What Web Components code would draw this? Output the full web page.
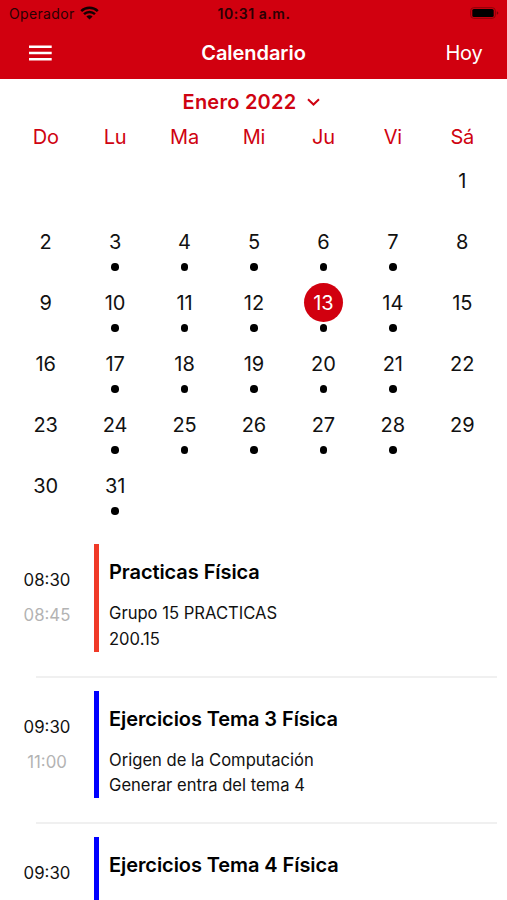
<!DOCTYPE html>
<html lang="es">
<head>
<meta charset="utf-8">
<title>Calendario</title>
<style>
html, body { margin: 0; height: 900px; overflow: hidden; background: #fff; }
body { font-family: Inter, "Liberation Sans", sans-serif; color: #111; }
</style>
</head>
<body>
<calendar-screen></calendar-screen>
<script>
const define = (name, html, setup) => customElements.define(name, class extends HTMLElement {
  connectedCallback() {
    const root = this.attachShadow({ mode: 'open' });
    root.innerHTML = html;
    if (setup) setup(this, root);
  }
});

define('status-bar', `
<style>
:host { display: grid; grid-template-columns: 1fr auto 1fr; align-items: center; height: 27px; padding: 0 8px 0 9px; box-sizing: border-box; color: #2a0003; font-size: 14px; line-height: 27px; }
.left { display: flex; align-items: center; gap: 5px; }
.carrier { letter-spacing: .35px; }
.time { font-weight: 600; letter-spacing: .55px; }
.right { display: flex; justify-content: flex-end; }
svg { display: block; }
.right svg { margin-top: -1px; }
.left svg { margin-top: -2px; }
</style>
<div class="left"><span class="carrier">Operador</span>
<svg width="19" height="14" viewBox="0 0 19 14" fill="none" stroke="#140002"><path d="M1.2 5.1a11.8 11.8 0 0 1 16.6 0" stroke-width="2.5"/><path d="M4 8.2a7.8 7.8 0 0 1 11 0" stroke-width="2.4"/><path d="M9.5 13.6 6.4 10.6a4.4 4.4 0 0 1 6.2 0z" fill="#140002" stroke="none"/></svg></div>
<span class="time">10:31 a.m.</span>
<div class="right"><svg width="29" height="12" viewBox="0 0 29 12"><rect x=".7" y=".7" width="24.6" height="10.6" rx="3" fill="none" stroke="#8a0008" stroke-width="1"/><rect x="2.3" y="2" width="21.4" height="8" rx="1.6"/><path d="M26.8 4.2q1.6.6 1.6 1.8t-1.6 1.8z" fill="#7a0007"/></svg></div>
`);

define('nav-bar', `
<style>
:host { display: grid; grid-template-columns: 1fr auto 1fr; align-items: center; height: 52px; padding: 0 24.5px 0 28.5px; box-sizing: border-box; color: #fff; font-size: 20px; line-height: 52px; }
svg { display: block; margin-top: -1px; }
.title { font-weight: 600; letter-spacing: -.05px; margin: -1px 3px 0 -1px; }
.action { text-align: right; letter-spacing: -.2px; margin-top: -1px; }
</style>
<svg width="23" height="16" viewBox="0 0 23 16" fill="#fff"><path d="M0 .5h22.7v2.6H0zM0 6.8h22.7v2.5H0zM0 13h22.7v2.5H0z"/></svg>
<span class="title"><slot></slot></span>
<span class="action"><slot name="action"></slot></span>
`);

define('month-picker', `
<style>
:host { display: flex; justify-content: center; align-items: center; gap: 11px; height: 45px; padding-right: 4px; box-sizing: border-box; color: #cf0311; font-weight: 600; font-size: 20px; line-height: 46px; }
span { letter-spacing: .25px; padding-top: 1px; }
svg { display: block; }
</style>
<span><slot></slot></span>
<svg width="13" height="8" viewBox="0 0 13 8" fill="none" stroke="#cf0311" stroke-width="2"><path d="M1 1.2l5.5 5.3L12 1.2"/></svg>
`);

define('day-cell', `
<style>
:host { display: flex; flex-direction: column; align-items: center; height: 61px; font-size: 20px; }
.num { width: 39px; height: 39px; border-radius: 50%; line-height: 41px; text-align: center; }
:host([selected]) .num { background: #d1000f; color: #fff; }
:host([event])::after { content: ""; width: 7.6px; height: 7.6px; border-radius: 50%; background: #000; margin-top: 2px; }
</style>
<div class="num"><slot></slot></div>
`);

define('month-grid', `
<style>
:host { display: block; padding: 0 10px 0 11px; }
.grid { display: grid; grid-template-columns: repeat(7, 1fr); }
.head { height: 37px; line-height: 27px; text-align: center; color: #cf0311; font-size: 20px; letter-spacing: -.2px; }
</style>
<div class="grid"></div>
`, (el, root) => {
  const grid = root.querySelector('.grid');
  const heads = ['Do', 'Lu', 'Ma', 'Mi', 'Ju', 'Vi', 'Sá'].map(d => `<div class="head"><span>${d}</span></div>`).join('');
  let days = '<span></span>'.repeat(6);
  for (let d = 1; d <= 31; d++) {
    const wd = (d + 5) % 7;
    const ev = d > 1 && wd > 0 && wd < 6 ? ' event' : '';
    days += `<day-cell${ev}${d === 13 ? ' selected' : ''}>${d}</day-cell>`;
  }
  grid.innerHTML = heads + days;
});

define('agenda-event', `
<style>
:host { display: block; height: 146.5px; }
.row { display: flex; height: 107.5px; }
.times { width: 94px; text-align: center; font-size: 16.8px; padding-top: 19px; box-sizing: border-box; line-height: 35px; }
.end { color: #b3b3b3; }
.bar { width: 5px; background: var(--bar, #00f); flex: none; }
.body { padding: 15px 0 0 10px; white-space: nowrap; }
.title { font-weight: 600; font-size: 20px; line-height: 27px; margin-bottom: 15px; color: #000; letter-spacing: -.08px; }
.desc { font-size: 16.6px; line-height: 25.5px; }
hr { margin: 24px 10px 0 36px; border: 0; height: 2px; background: #f0f0f0; }
</style>
<div class="row">
<div class="times"><div><span><slot name="start"></slot></span></div><div class="end"><span><slot name="end"></slot></span></div></div>
<div class="bar"></div>
<div class="body"><div class="title"><span><slot></slot></span></div><div class="desc"><span><slot name="line1"></slot></span></div><div class="desc"><span><slot name="line2"></slot></span></div></div>
</div><hr>
`);

define('calendar-screen', `
<style>
:host { display: block; height: 900px; overflow: hidden; background: #fff; }
header { background: #d1000f; height: 79px; }
.agenda { padding-top: 17.3px; }
</style>
<header><status-bar></status-bar><nav-bar>Calendario<span slot="action">Hoy</span></nav-bar></header>
<month-picker>Enero 2022</month-picker>
<month-grid></month-grid>
<div class="agenda">
<agenda-event style="--bar:#f03a28"><span slot="start">08:30</span><span slot="end">08:45</span>Practicas Física<span slot="line1">Grupo 15 PRACTICAS</span><span slot="line2">200.15</span></agenda-event>
<agenda-event><span slot="start">09:30</span><span slot="end">11:00</span>Ejercicios Tema 3 Física<span slot="line1">Origen de la Computación</span><span slot="line2">Generar entra del tema 4</span></agenda-event>
<agenda-event><span slot="start">09:30</span>Ejercicios Tema 4 Física</agenda-event>
</div>
`);
</script>
</body>
</html>
